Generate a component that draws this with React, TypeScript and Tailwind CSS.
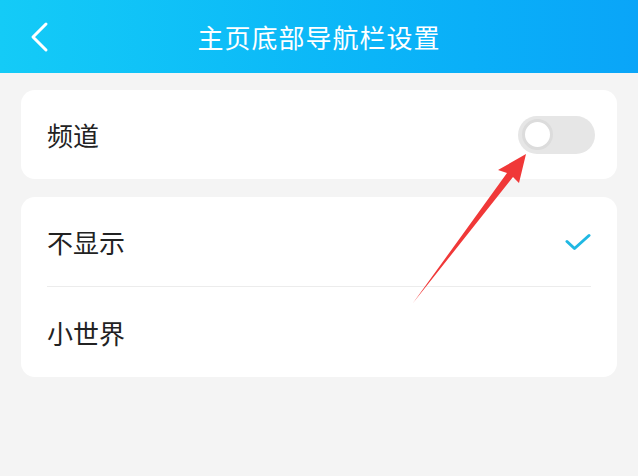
const font = { fontFamily: '"Noto Sans CJK SC", "Noto Sans", sans-serif' }

function Toggle() {
  return (
    <div className="flex h-[38px] w-[77px] items-center rounded-full bg-[#e6e6e6] pl-[4px]">
      <div className="h-[31px] w-[31px] rounded-full border-[3px] border-[#dcdcdc] bg-white" />
    </div>
  )
}

function Check() {
  return (
    <svg width="26" height="18" viewBox="0 0 26 18" fill="none">
      <path d="M2 8.5 L9.5 15.5 L24 2.5" stroke="#1fb8e3" strokeWidth="3" strokeLinecap="round" strokeLinejoin="round" />
    </svg>
  )
}

function Back() {
  return (
    <svg width="20" height="32" viewBox="0 0 20 32" fill="none">
      <path d="M16 3 L3 16 L16 29" stroke="white" strokeWidth="3" strokeLinecap="round" strokeLinejoin="round" />
    </svg>
  )
}

export default function App() {
  return (
    <div className="relative h-[476px] w-[638px] overflow-hidden bg-[#f4f4f4]" style={font}>
      {/* Header */}
      <header className="flex h-[73px] items-center bg-gradient-to-r from-[#14cbf7] to-[#0aa5f8] pl-[30px] pr-[24px] text-white">
        <Back />
        <h1 className="flex-1 pr-[26px] text-center text-[26px] leading-none tracking-[1px]">主页底部导航栏设置</h1>
      </header>

      <main className="flex flex-col gap-[18px] px-[21px] pt-[17px]">
        <section className="flex h-[89px] items-center justify-between rounded-[14px] bg-white pl-[26px] pr-[22px]">
          <span className="text-[26px] text-[#222]">频道</span>
          <Toggle />
        </section>

        <section className="flex flex-col rounded-[14px] bg-white pl-[26px] pr-[26px]">
          <div className="flex h-[90px] items-center justify-between border-b border-[#ececec]">
            <span className="text-[26px] text-[#222]">不显示</span>
            <Check />
          </div>
          <div className="flex h-[90px] items-center">
            <span className="text-[26px] text-[#222]">小世界</span>
          </div>
        </section>
      </main>

      {/* Annotation arrow */}
      <svg className="pointer-events-none absolute left-0 top-0" width="638" height="476" viewBox="0 0 638 476">
        <polygon points="413,303 507,173 498,170 526,154 519,183 513,177" fill="#f03838" />
      </svg>
    </div>
  )
}
